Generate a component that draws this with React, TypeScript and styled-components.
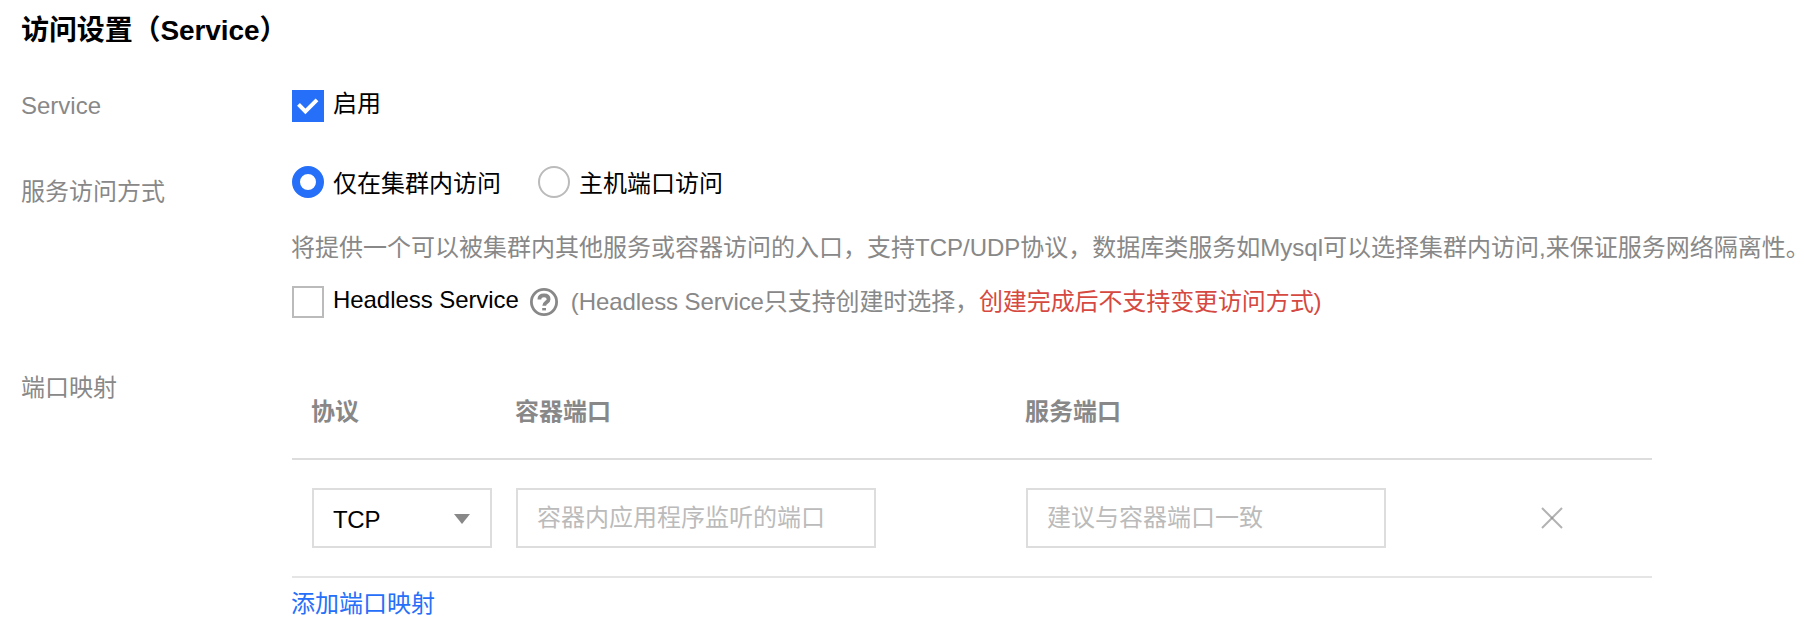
import React from "react";
import styled, { createGlobalStyle } from "styled-components";

const GlobalStyle = createGlobalStyle`
  * { box-sizing: border-box; }
  body {
    margin: 0;
    background: #fff;
    color: #000;
    font: 24px/36px "Liberation Sans", "Noto Sans CJK SC", sans-serif;
  }
`;

const Page = styled.main`
  width: 1804px;
  height: 636px;
  padding: 13px 0 0 21px;
  overflow: hidden;
  background: #fff;
`;

const Title = styled.h2`
  margin: 0;
  font-size: 28px;
  line-height: 36px;
  font-weight: 700;
  letter-spacing: -0.1px;
`;

const Row = styled.section<{ $top: number; $height?: number }>`
  display: flex;
  align-items: flex-start;
  margin-top: ${(p) => p.$top}px;
  height: ${(p) => (p.$height ? `${p.$height}px` : "auto")};
`;

const RowLabel = styled.div<{ $offset?: number }>`
  flex: 0 0 271px;
  padding-top: ${(p) => p.$offset ?? 0}px;
  color: #888;
`;

const Control = styled.div`
  flex: 1;
  min-width: 0;
`;

const Options = styled.div`
  display: flex;
  align-items: flex-start;
  gap: 37px;
`;

const Choice = styled.label`
  display: flex;
  align-items: flex-start;
  gap: 9px;
  white-space: nowrap;
`;

const CheckMark = styled.span<{ $checked?: boolean }>`
  width: 32px;
  height: 32px;
  margin-top: 4px;
  border: 2px solid ${(p) => (p.$checked ? "#266ff8" : "#bbb")};
  background: ${(p) => (p.$checked ? "#266ff8" : "#fff")};

  svg {
    display: block;
    margin: -2px;
  }
`;

const RadioMark = styled.span<{ $checked?: boolean }>`
  width: 32px;
  height: 32px;
  border-radius: 50%;
  border: ${(p) => (p.$checked ? "8px solid #266ff8" : "2px solid #bbb")};
  background: #fff;
`;

const Description = styled.p`
  margin: 28px 0 0 -1px;
  color: #888;
  white-space: nowrap;
`;

/* Half-width closing punctuation, so the line ends inside the page. */
const LineEnd = styled.span`
  font-feature-settings: "halt";
`;

const HeadlessLine = styled.div`
  display: flex;
  align-items: flex-start;
  margin-top: 16px;
  white-space: nowrap;
`;

const HelpIcon = styled.svg`
  width: 28px;
  height: 28px;
  margin: 6px 13px 0 11px;
`;

const HeadlessText = styled.span`
  letter-spacing: -0.06px;
`;

const Note = styled.span`
  padding-top: 2px;
  color: #888;
  letter-spacing: -0.1px;
`;

const Warning = styled.span`
  color: #d54941;
`;

const PortTable = styled.div`
  width: 1360px;
`;

const TableRow = styled.div`
  display: grid;
  grid-template-columns: 204px 510px 510px 136px;
  height: 118px;
  padding-top: 28px;
  border-bottom: 2px solid #e5e5e5;
`;

const HeaderRow = styled(TableRow)`
  height: 90px;
  padding-top: 24px;
  border-bottom-color: #ddd;
  color: #888;
  font-weight: 700;
`;

const Cell = styled.div`
  padding-left: 20px;
`;

const HeaderCell = styled.div`
  padding-left: 19px;
`;

const Select = styled.div`
  display: flex;
  align-items: center;
  justify-content: space-between;
  width: 180px;
  height: 60px;
  padding: 4px 20px 0 19px;
  border: 2px solid #ddd;
  letter-spacing: -0.3px;
`;

const Caret = styled.span`
  margin-top: -2px;
  border: 8px solid transparent;
  border-top: 10px solid #888;
  border-bottom: 0;
`;

const PortInput = styled.input`
  display: block;
  width: 360px;
  height: 60px;
  padding: 0 18px 0 19px;
  border: 2px solid #ddd;
  border-radius: 0;
  background: #fff;
  font: inherit;
  outline: none;

  &::placeholder {
    color: #bbb;
    opacity: 1;
  }
`;

const RemoveButton = styled.button`
  display: block;
  width: 22px;
  height: 22px;
  margin: 19px 0 0 5px;
  padding: 0;
  border: 0;
  background: none;

  svg {
    display: block;
  }
`;

const AddLink = styled.a`
  display: inline-block;
  margin: 8px 0 0 -1px;
  color: #266ff8;
  text-decoration: none;
`;

export default function App() {
  return (
    <>
      <GlobalStyle />
      <Page>
        <Title>访问设置（Service）</Title>

        <Row $top={37} $height={80}>
          <RowLabel $offset={2}>Service</RowLabel>
          <Control>
            <Choice>
              <CheckMark $checked>
                <svg width="32" height="32" viewBox="0 0 32 32" fill="none">
                  <path d="M6.5 14.4 13.4 21.4 25 9.9" stroke="#fff" strokeWidth="4" />
                </svg>
              </CheckMark>
              <span>启用</span>
            </Choice>
          </Control>
        </Row>

        <Row $top={0} $height={204}>
          <RowLabel $offset={8}>服务访问方式</RowLabel>
          <Control>
            <Options>
              <Choice>
                <RadioMark $checked />
                <span>仅在集群内访问</span>
              </Choice>
              <Choice>
                <RadioMark />
                <span>主机端口访问</span>
              </Choice>
            </Options>
            <Description>
              将提供一个可以被集群内其他服务或容器访问的入口，支持TCP/UDP协议，数据库类服务如Mysql可以选择集群内访问,来保证服务网络隔离性<LineEnd>。</LineEnd>
            </Description>
            <HeadlessLine>
              <Choice>
                <CheckMark />
                <HeadlessText>Headless Service</HeadlessText>
              </Choice>
              <HelpIcon viewBox="0 0 28 28" fill="none">
                <circle cx="14" cy="14" r="12.6" stroke="#888" strokeWidth="2.8" />
                <path
                  d="M9.4 11.4C9.4 8.8 11.2 7.4 14 7.4s4.6 1.4 4.6 3.8c0 3-4.4 3.2-4.4 6.6"
                  stroke="#888"
                  strokeWidth="3.8"
                />
                <path d="M12.2 20h3.8v2.4h-3.8z" fill="#888" />
              </HelpIcon>
              <Note>
                (Headless Service只支持创建时选择，<Warning>创建完成后不支持变更访问方式)</Warning>
              </Note>
            </HeadlessLine>
          </Control>
        </Row>

        <Row $top={0}>
          <RowLabel>端口映射</RowLabel>
          <Control>
            <PortTable>
              <HeaderRow>
                <HeaderCell>协议</HeaderCell>
                <HeaderCell>容器端口</HeaderCell>
                <HeaderCell>服务端口</HeaderCell>
              </HeaderRow>
              <TableRow>
                <Cell>
                  <Select>
                    TCP
                    <Caret />
                  </Select>
                </Cell>
                <Cell>
                  <PortInput placeholder="容器内应用程序监听的端口" />
                </Cell>
                <Cell>
                  <PortInput placeholder="建议与容器端口一致" />
                </Cell>
                <Cell>
                  <RemoveButton aria-label="删除">
                    <svg width="22" height="22" viewBox="0 0 22 22" fill="none">
                      <g stroke="#888" strokeOpacity="0.65" strokeWidth="2">
                        <path d="M1 1 21 21" />
                        <path d="M21 1 1 21" />
                      </g>
                    </svg>
                  </RemoveButton>
                </Cell>
              </TableRow>
            </PortTable>
            <AddLink>添加端口映射</AddLink>
          </Control>
        </Row>
      </Page>
    </>
  );
}
